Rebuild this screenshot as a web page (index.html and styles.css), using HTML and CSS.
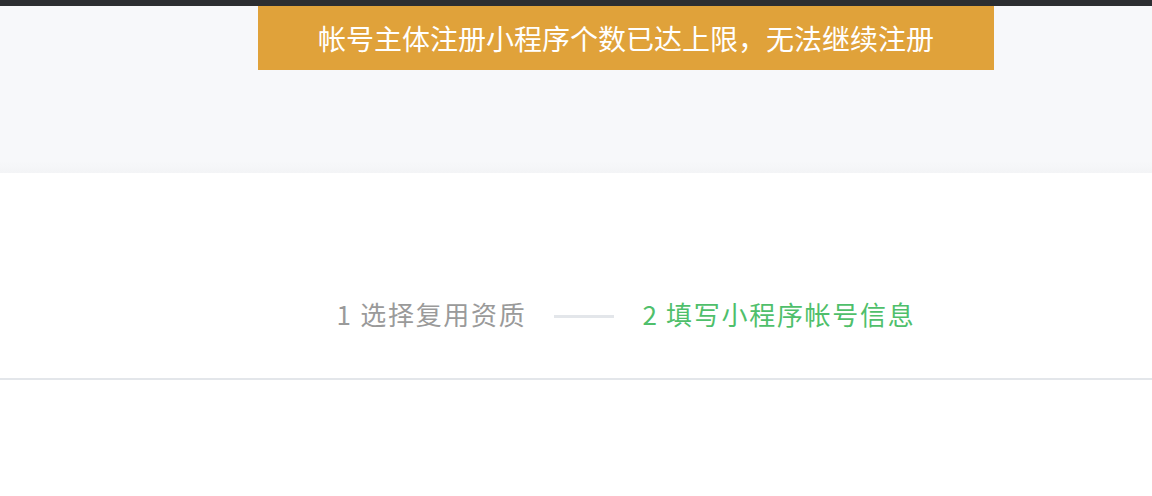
FILE: index.html
```html
<!DOCTYPE html>
<html lang="zh-CN">
<head>
    <meta charset="UTF-8">
    <meta name="viewport" content="width=device-width, initial-scale=1.0">
    <title>小程序注册</title>
    <link rel="stylesheet" href="styles.css">
</head>
<body>
    <div class="topbar"></div>

    <div class="header">
        <div class="notice">帐号主体注册小程序个数已达上限，无法继续注册</div>
    </div>

    <div class="main">
        <div class="steps">
            <span class="step">1 选择复用资质</span>
            <span class="step-line"></span>
            <span class="step active">2 填写小程序帐号信息</span>
        </div>
    </div>
</body>
</html>
```

FILE: styles.css
```css
:root {
    --warn-color: #e0a23a;
    --green-color: #4fbf6b;
    --gray-text: #9a9a9a;
    --header-bg: #f7f8fa;
    --line-color: #e3e6ea;
}

body {
    margin: 0;
    background-color: white;
    font-family: 'Noto Sans CJK SC', 'Noto Sans', sans-serif;
}

.topbar {
    height: 6px;
    background-color: #2c2e31;
}

.header {
    height: 167px;
    background: linear-gradient(to bottom, var(--header-bg) 93%, #f3f4f6 100%);
}

.notice {
    margin-left: 258px;
    width: 736px;
    height: 64px;
    background-color: var(--warn-color);
    color: white;
    font-size: 28px;
    line-height: 64px;
    text-align: center;
}

.main {
    padding-top: 121px;
    padding-bottom: 44px;
    border-bottom: 2px solid var(--line-color);
}

.steps {
    margin-left: 258px;
    width: 736px;
    height: 40px;
    display: flex;
    justify-content: center;
    align-items: center;
}

.step {
    font-size: 26px;
    letter-spacing: 1.7px;
    color: var(--gray-text);
    line-height: 40px;
}

.step.active {
    color: var(--green-color);
}

.step-line {
    width: 60px;
    height: 3px;
    margin: 4px 28px 0 28px;
    background-color: var(--line-color);
}
```
